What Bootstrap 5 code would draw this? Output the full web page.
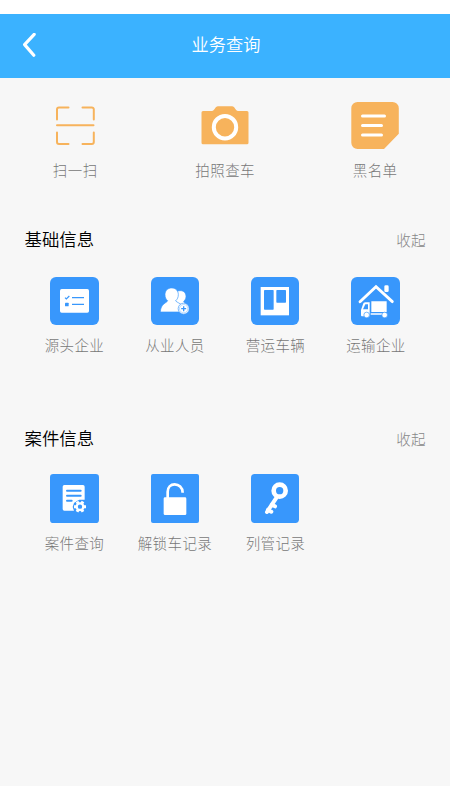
<!DOCTYPE html>
<html lang="zh-CN">
<head>
    <meta charset="UTF-8">
    <meta name="viewport" content="width=device-width, initial-scale=1.0">
    <title>业务查询</title>

    <!-- Bootstrap 5 -->
    <link href="https://cdn.jsdelivr.net/npm/bootstrap@5.3.0/dist/css/bootstrap.min.css" rel="stylesheet">
    <script src="https://cdn.jsdelivr.net/npm/bootstrap@5.3.0/dist/js/bootstrap.bundle.min.js"></script>

    <style>
        body {
            background-color: #fff;
            font-family: "Noto Sans CJK SC", sans-serif;
            font-weight: 300;
            padding-top: 14px;
        }
        svg {
            display: block;
        }
        .app-bar {
            background-color: #3bb2ff;
            height: 64px;
            padding: 0 20px 0 22px;
        }
        .app-title {
            color: #fff;
            font-size: 17.2px;
            font-weight: 350;
            line-height: 26px;
            margin-top: -5px;
        }
        .side-slot {
            width: 16px;
        }
        .screen {
            background-color: #f7f7f7;
            height: 708px;
        }
        .quick-row {
            padding-top: 23px;
            height: 138px;
        }
        .entry {
            color: #777;
            text-decoration: none;
        }
        .entry-label {
            font-size: 14.5px;
            letter-spacing: 0.4px;
            line-height: 20px;
            margin-right: -0.4px;
            white-space: nowrap;
        }
        .quick-row .entry-label {
            margin-top: 10px;
        }
        .section-head {
            padding: 10px 24px 0 24.5px;
            height: 49px;
        }
        .section-title {
            color: #000;
            font-size: 17.4px;
            font-weight: 350;
            line-height: 26px;
        }
        .fold-btn {
            color: #888;
            font-size: 14.5px;
            font-weight: 300;
            letter-spacing: 0.4px;
            line-height: 27px;
        }
        .section-grid {
            padding: 12px 24px 0;
            height: 150px;
        }
        .case-grid {
            padding-top: 10px;
        }
        .section-grid .entry-label {
            margin-top: 10px;
        }
    </style>
</head>
<body>

<nav class="app-bar d-flex align-items-center justify-content-between">
    <a class="side-slot" href="#" aria-label="返回">
        <svg width="16" height="26" viewBox="0 0 16 26" fill="none" stroke="#fff" stroke-width="3.2" stroke-linecap="round" stroke-linejoin="round">
            <path d="M12.200 1.300 2.600 11.600l9.200 10.700"/>
        </svg>
    </a>
    <h1 class="app-title mb-0">业务查询</h1>
    <span class="side-slot"></span>
</nav>

<main class="screen">
    <!-- Quick actions -->
    <div class="quick-row row g-0">
        <a class="entry col-4 d-flex flex-column align-items-center" href="#">
            <svg width="48" height="49" viewBox="0 0 48 49" fill="none" stroke="#f7b35c" stroke-width="2" stroke-linecap="round">
                <path d="M6 18.500V8.400a2 2 0 0 1 2-2H17.500M31.500 6.400h9.300a2 2 0 0 1 2 2v10.100M6 31.500v9.600a2 2 0 0 0 2 2h9.500M31.500 43.100h9.300a2 2 0 0 0 2-2v-9.600M6 24.300h36.500"/>
            </svg>
            <span class="entry-label">扫一扫</span>
        </a>
        <a class="entry col-4 d-flex flex-column align-items-center" href="#">
            <svg width="48" height="49" viewBox="0 0 48 49">
                <path fill="#f7b35c" d="M2 10h9c2.500 0 3-4.800 6-4.800h14C34 5.200 34.500 10 37 10h9a1.500 1.500 0 0 1 1.500 1.500v30.300a1.500 1.500 0 0 1-1.500 1.500H2a1.500 1.500 0 0 1-1.500-1.500V11.500A1.500 1.500 0 0 1 2 10z"/>
                <circle cx="24" cy="26.200" r="11.200" fill="none" stroke="#fff" stroke-width="4"/>
            </svg>
            <span class="entry-label">拍照查车</span>
        </a>
        <a class="entry col-4 d-flex flex-column align-items-center" href="#">
            <svg width="48" height="49" viewBox="0 0 48 49">
                <path fill="#f7b35c" d="M6.500 1h35A6.300 6.300 0 0 1 47.800 7.300v25.500L33 48H6.500A6.200 6.200 0 0 1 .300 41.800V7.200A6.200 6.200 0 0 1 6.500 1z"/>
                <path stroke="#fff" stroke-width="3" stroke-linecap="round" d="M11.500 15H33.500M11.500 24.400H30.500M11.500 33.900H30.500"/>
            </svg>
            <span class="entry-label">黑名单</span>
        </a>
    </div>

    <!-- Basic information -->
    <section>
        <div class="section-head d-flex justify-content-between align-items-start">
            <h2 class="section-title mb-0">基础信息</h2>
            <button type="button" class="fold-btn btn p-0 border-0">收起</button>
        </div>
        <div class="section-grid row g-0">
            <a class="entry col-3 d-flex flex-column align-items-center" href="#">
                <svg width="49" height="48" viewBox="0 0 147 144">
                    <rect width="147" height="144" rx="18" fill="#3897fc"/>
                    <rect x="30" y="36" width="87" height="71" rx="5" fill="#fff"/>
                    <path d="m45 62 4 4 9-9M66 62h36M66 82h36" fill="none" stroke="#3897fc" stroke-width="3.500"/>
                    <rect x="45" y="77" width="11" height="11" rx="2" fill="#3897fc"/>
                </svg>
                <span class="entry-label">源头企业</span>
            </a>
            <a class="entry col-3 d-flex flex-column align-items-center" href="#">
                <svg width="48" height="48" viewBox="0 0 144 144">
                    <rect width="144" height="144" rx="18" fill="#3897fc"/>
                    <g fill="#fff" stroke="#3897fc" stroke-width="2">
                        <path d="M88 41c12 0 17 8 17 18 0 7-4 11-7 14 0 5 13 7 15 20v10H74V45c4-3 9-4 14-4z"/>
                        <path d="M62 33c12 0 20 8 20 20 0 8-3 14-8 18 1 6 26 8 27 34H28c1-26 20-27 22-34-5-4-8-10-8-18 0-12 8-20 20-20z"/>
                        <circle cx="98" cy="95" r="16.500"/>
                    </g>
                    <circle cx="98" cy="95" r="12.500" fill="#fff" stroke="#3897fc" stroke-width="1"/>
                    <path d="M90.500 95h15M98 87.500v15" stroke="#3897fc" stroke-width="4"/>
                </svg>
                <span class="entry-label">从业人员</span>
            </a>
            <a class="entry col-3 d-flex flex-column align-items-center" href="#">
                <svg width="48" height="48" viewBox="0 0 144 144">
                    <rect width="144" height="144" rx="18" fill="#3897fc"/>
                    <rect x="29" y="30" width="85" height="85" fill="#fff"/>
                    <rect x="39" y="39" width="29" height="59" rx="2" fill="#3897fc"/>
                    <rect x="76" y="39" width="29" height="38" rx="2" fill="#3897fc"/>
                </svg>
                <span class="entry-label">营运车辆</span>
            </a>
            <a class="entry col-3 d-flex flex-column align-items-center" href="#">
                <svg width="49" height="48" viewBox="0 0 147 144">
                    <rect width="147" height="144" rx="18" fill="#3897fc"/>
                    <path d="M27 74 75 29l49 45" fill="none" stroke="#fff" stroke-width="8.500" stroke-linecap="round"/>
                    <rect x="100" y="25" width="13" height="20" rx="4" fill="#fff"/>
                    <path fill="#fff" d="M61 73h46v32H61zM59 109h42v4H59zM43 76h13v42H34c-3 0-4-2-4-4V99l6-17c1-4 3-6 7-6z"/>
                    <path fill="#3897fc" d="M43 82h8v15H36z"/>
                    <g fill="#fff" stroke="#3897fc" stroke-width="2">
                        <circle cx="47" cy="114" r="8.500"/>
                        <circle cx="101" cy="114" r="8.500"/>
                    </g>
                </svg>
                <span class="entry-label">运输企业</span>
            </a>
        </div>
    </section>

    <!-- Case information -->
    <section>
        <div class="section-head d-flex justify-content-between align-items-start">
            <h2 class="section-title mb-0">案件信息</h2>
            <button type="button" class="fold-btn btn p-0 border-0">收起</button>
        </div>
        <div class="section-grid case-grid row g-0">
            <a class="entry col-3 d-flex flex-column align-items-center" href="#">
                <svg width="49" height="49" viewBox="0 0 147 147">
                    <rect width="147" height="147" rx="10" fill="#3897fc"/>
                    <path fill="#fff" d="M43 33h56a5 5 0 0 1 5 5v39H88L72 87l-4 12 4 11H43a5 5 0 0 1-5-5V38a5 5 0 0 1 5-5z"/>
                    <path d="M51 50h41M51 65h41M51 80h14" stroke="#3897fc" stroke-width="6" stroke-linecap="round"/>
                    <circle cx="90" cy="98" r="19" fill="#3897fc"/>
                    <circle cx="90" cy="98" r="10" fill="none" stroke="#fff" stroke-width="7"/>
                    <path d="M80 98h-8M100 98h8M85 89.300l-4-6.700M95 106.700l4 6.700M95 89.300l4-6.700M85 106.700l-4 6.700" stroke="#fff" stroke-width="9"/>
                </svg>
                <span class="entry-label">案件查询</span>
            </a>
            <a class="entry col-3 d-flex flex-column align-items-center" href="#">
                <svg width="48" height="49" viewBox="0 0 144 147">
                    <rect width="144" height="147" rx="6" fill="#3897fc"/>
                    <rect x="38" y="70" width="68" height="53" rx="4" fill="#fff"/>
                    <path d="M50 72V53c0-13 9-22 21-22s24 9 24 25" fill="none" stroke="#fff" stroke-width="8"/>
                </svg>
                <span class="entry-label">解锁车记录</span>
            </a>
            <a class="entry col-3 d-flex flex-column align-items-center" href="#">
                <svg width="48" height="49" viewBox="0 0 144 147">
                    <rect width="144" height="147" rx="11" fill="#3897fc"/>
                    <circle cx="86" cy="50" r="18" fill="none" stroke="#fff" stroke-width="14"/>
                    <path d="M77 70 48 114M62 92l10 5M51 107l10 6" fill="none" stroke="#fff" stroke-width="12" stroke-linecap="round"/>
                </svg>
                <span class="entry-label">列管记录</span>
            </a>
        </div>
    </section>
</main>

</body>
</html>
